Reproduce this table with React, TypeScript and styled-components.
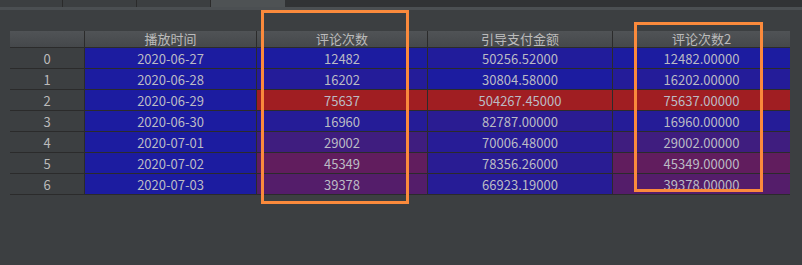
import React from 'react';
import styled, { createGlobalStyle } from 'styled-components';

const GlobalStyle = createGlobalStyle`
  html, body {
    margin: 0;
    padding: 0;
    background: #3c3f41;
  }
  body {
    font-family: "Noto Sans CJK SC", "Noto Sans", sans-serif;
  }
`;

const columns = ['播放时间', '评论次数', '引导支付金额', '评论次数2'];

const rows: [string, number, number, number][] = [
  ['2020-06-27', 12482, 50256.52, 12482],
  ['2020-06-28', 16202, 30804.58, 16202],
  ['2020-06-29', 75637, 504267.45, 75637],
  ['2020-06-30', 16960, 82787.0, 16960],
  ['2020-07-01', 29002, 70006.48, 29002],
  ['2020-07-02', 45349, 78356.26, 45349],
  ['2020-07-03', 39378, 66923.19, 39378],
];

const BLUE = [28, 28, 160];
const RED = [160, 30, 34];

function heat(value: number, min: number, max: number) {
  const t = max === min ? 0 : (value - min) / (max - min);
  const c = BLUE.map((b, i) => Math.round(b + (RED[i] - b) * t));
  return `rgb(${c[0]}, ${c[1]}, ${c[2]})`;
}

export default function App() {
  const ranges = [1, 2, 3].map((k) => {
    const vals = rows.map((r) => r[k] as number);
    return [Math.min(...vals), Math.max(...vals)];
  });

  return (
    <>
      <GlobalStyle />
      <Page>
        <TabBar>
          <Tab width={62} />
          <Tab width={73} />
          <Tab width={73} />
          <Tab width={73} active />
          <TabRest />
        </TabBar>
        <TabStrip />
        <Grid>
          <HeadCell />
          {columns.map((c) => (
            <HeadCell key={c}>{c}</HeadCell>
          ))}
          {rows.map((r, i) => (
            <React.Fragment key={i}>
              <IndexCell>{i}</IndexCell>
              <Cell style={{ background: heat(0, 0, 1) }}>{r[0]}</Cell>
              <Cell style={{ background: heat(r[1], ranges[0][0], ranges[0][1]) }}>{r[1]}</Cell>
              <Cell style={{ background: heat(r[2], ranges[1][0], ranges[1][1]) }}>{r[2].toFixed(5)}</Cell>
              <Cell style={{ background: heat(r[3], ranges[2][0], ranges[2][1]) }}>{r[3].toFixed(5)}</Cell>
            </React.Fragment>
          ))}
        </Grid>
        <Highlight style={{ left: 261, top: 10, width: 148, height: 194 }} />
        <Highlight style={{ left: 634, top: 22, width: 129, height: 170 }} />
      </Page>
    </>
  );
}

const Page = styled.div`
  position: relative;
  width: 802px;
  height: 265px;
  overflow: hidden;
  background: #3c3f41;
`;

const TabBar = styled.div`
  display: flex;
  height: 7px;
  background: #313335;
`;

const Tab = styled.div<{ active?: boolean; width: number }>`
  width: ${(p) => p.width}px;
  border-right: 1px solid ${(p) => (p.active ? '#4e5254' : '#2b2b2b')};
  background: ${(p) => (p.active ? '#4e5254' : '#3c3f41')};
`;

const TabRest = styled.div`
  flex: 1;
  background: #313335;
`;

const TabStrip = styled.div`
  height: 3px;
  background: #4b4f52;
`;

const Grid = styled.div`
  display: grid;
  grid-template-columns: 74px 171px 170px 184px 177px;
  grid-auto-rows: 20px;
  grid-template-rows: 16px;
  column-gap: 1px;
  row-gap: 1px;
  margin: 21px 0 0 10px;
  width: 780px;
  background: #2b2b2b;
  border-bottom: 1px solid #2b2b2b;
  font-size: 13px;
  color: #bbbbc4;
`;

const HeadCell = styled.div`
  display: flex;
  align-items: center;
  justify-content: center;
  background: linear-gradient(#505356, #45484b);
  color: #bbbbbb;
  line-height: 16px;
  white-space: nowrap;
`;

const IndexCell = styled.div`
  display: flex;
  align-items: center;
  justify-content: center;
  background: #3c3f41;
  color: #bbbbbb;
`;

const Cell = styled.div`
  display: flex;
  align-items: center;
  justify-content: center;
  white-space: nowrap;
`;

const Highlight = styled.div`
  position: absolute;
  box-sizing: border-box;
  border: 3px solid #fb8a3c;
  pointer-events: none;
`;
